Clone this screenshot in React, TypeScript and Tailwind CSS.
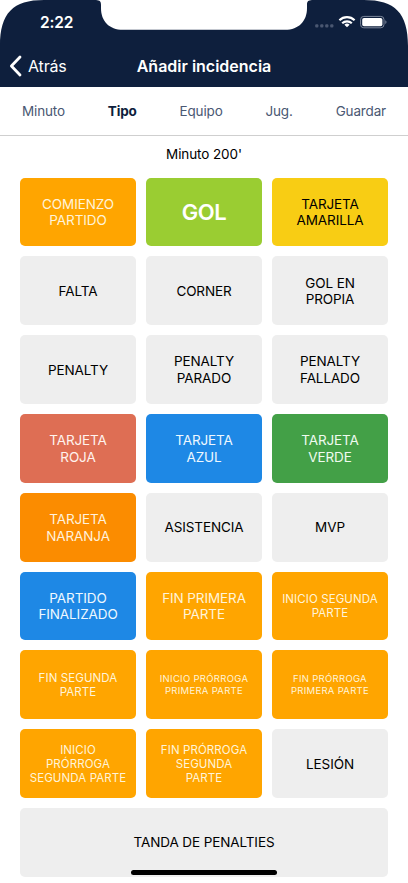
type Tile = {
  lines: string[];
  color: string;
  text?: string;
};

const gray = "bg-[#eeeeee] text-black";
const orange = "bg-[#ffa500] text-[#fff4d9]";
const normal = "text-[13.5px] leading-[16.6px] tracking-[-0.1px]";
const small = "text-[11.5px] leading-[14px] tracking-[0.1px]";
const tiny = "text-[9.5px] leading-[12px] tracking-[0.3px]";

const tiles: Tile[] = [
  { lines: ["COMIENZO", "PARTIDO"], color: orange },
  { lines: ["GOL"], color: "bg-[#9acd32] text-white", text: "text-[22px] leading-[24px] font-semibold tracking-[-0.4px]" },
  { lines: ["TARJETA", "AMARILLA"], color: "bg-[#f8cd14] text-black" },
  { lines: ["FALTA"], color: gray },
  { lines: ["CORNER"], color: gray },
  { lines: ["GOL EN", "PROPIA"], color: gray },
  { lines: ["PENALTY"], color: gray },
  { lines: ["PENALTY", "PARADO"], color: gray },
  { lines: ["PENALTY", "FALLADO"], color: gray },
  { lines: ["TARJETA", "ROJA"], color: "bg-[#de6e54] text-[#fff3ee]" },
  { lines: ["TARJETA", "AZUL"], color: "bg-[#1e88e5] text-[#eef8ff]" },
  { lines: ["TARJETA", "VERDE"], color: "bg-[#43a047] text-[#effbef]" },
  { lines: ["TARJETA", "NARANJA"], color: "bg-[#fb8c00] text-[#fff1dc]" },
  { lines: ["ASISTENCIA"], color: gray },
  { lines: ["MVP"], color: gray },
  { lines: ["PARTIDO", "FINALIZADO"], color: "bg-[#1e88e5] text-[#eef8ff]" },
  { lines: ["FIN PRIMERA", "PARTE"], color: orange },
  { lines: ["INICIO SEGUNDA", "PARTE"], color: orange, text: small },
  { lines: ["FIN SEGUNDA", "PARTE"], color: orange, text: small },
  { lines: ["INICIO PRÓRROGA", "PRIMERA PARTE"], color: orange, text: tiny },
  { lines: ["FIN PRÓRROGA", "PRIMERA PARTE"], color: orange, text: tiny },
  { lines: ["INICIO", "PRÓRROGA", "SEGUNDA PARTE"], color: orange, text: small },
  { lines: ["FIN PRÓRROGA", "SEGUNDA", "PARTE"], color: orange, text: small },
  { lines: ["LESIÓN"], color: gray },
];

const TileButton = ({ lines, color, text = normal }: Tile) => (
  <button className={`flex h-[68.8px] flex-col items-center justify-center rounded-[5px] pt-px whitespace-nowrap ${color} ${text}`}>
    {lines.map((line) => (
      <span key={line} className="block">{line}</span>
    ))}
  </button>
);

const StatusIcons = () => (
  <svg width="74" height="14" viewBox="0 0 74 14" fill="none">
    {/* no cellular signal */}
    <g fill="#4a5771">
      <rect x="1.2" y="9.2" width="3.2" height="3.2" rx="1" />
      <rect x="6.2" y="9.2" width="3.2" height="3.2" rx="1" />
      <rect x="11.2" y="9.2" width="3.2" height="3.2" rx="1" />
      <rect x="16.2" y="9.2" width="3.2" height="3.2" rx="1" />
    </g>
    {/* wifi */}
    <g stroke="#fff" strokeWidth="2.2">
      <path d="M25.4 5.2a11 11 0 0 1 15.2 0" />
      <path d="M28.2 8.2a7 7 0 0 1 9.6 0" />
    </g>
    <path d="M33 12.2 30.4 9.7a3.8 3.8 0 0 1 5.2 0z" fill="#fff" />
    {/* battery */}
    <rect x="46.6" y="1.4" width="23.4" height="11.4" rx="3.2" stroke="#7c879b" />
    <rect x="48.2" y="3" width="20.2" height="8.2" rx="1.8" fill="#fff" />
    <path d="M71.3 5.3c1.6.5 1.6 3.1 0 3.6z" fill="#7c879b" />
  </svg>
);

const Header = () => (
  <header className="relative h-[87px] bg-[#0e1f3d] text-white">
    {/* screen corners and notch */}
    <svg className="absolute inset-0" width="408" height="87" viewBox="0 0 408 87" fill="#fff">
      <path d="M0 0H44C13 0 0 13 0 46Z" />
      <path d="M408 0H364C395 0 408 13 408 46Z" />
      <path d="M96 0C100 .3 101 1.6 101 5V8C101 21 109 29.8 123 29.8H285C299 29.8 307 21 307 8V5C307 1.6 308 .3 312 0Z" />
    </svg>
    <div className="relative flex h-[44px] items-center justify-between pr-[20px] pl-[40px]">
      <span className="pt-[2px] text-[15.5px] leading-5 font-semibold tracking-[-0.2px]">2:22</span>
      <StatusIcons />
    </div>
    <div className="relative grid h-[43px] grid-cols-[1fr_auto_1fr] items-center">
      <button className="flex items-center gap-[6px] pl-[9px] text-[16px] leading-5 tracking-[-0.15px]">
        <svg width="13" height="22" viewBox="0 0 13 22" fill="none" stroke="#fff" strokeWidth="2.8" strokeLinecap="round" strokeLinejoin="round">
          <path d="M11 2 2.4 11 11 20" />
        </svg>
        Atrás
      </button>
      <h1 className="text-[16px] leading-5 font-semibold">Añadir incidencia</h1>
    </div>
  </header>
);

const tabs = ["Minuto", "Tipo", "Equipo", "Jug.", "Guardar"];

export default function App() {
  return (
    <div className="relative h-[883px] w-[408px] overflow-hidden bg-white font-['Inter',sans-serif]">
      <Header />
      <nav className="flex h-[49px] items-center justify-between border-b border-[#cfcfcf] px-[22px] text-[13.5px] leading-4 tracking-[-0.15px]">
        {tabs.map((tab) => (
          <button key={tab} className={tab === "Tipo" ? "font-bold text-[#0e1f3d]" : "text-[#4a5873]"}>
            {tab}
          </button>
        ))}
      </nav>
      <main className="px-5 pt-[9px]">
        <p className="text-center text-[13.5px] leading-[18px] tracking-[-0.1px] text-black">Minuto 200'</p>
        <div className="mt-[14.6px] grid grid-cols-3 gap-[10px]">
          {tiles.map((tile) => (
            <TileButton key={tile.lines.join(" ")} {...tile} />
          ))}
          <button className={`col-span-3 h-[68.8px] rounded-[5px] ${gray} ${normal}`}>TANDA DE PENALTIES</button>
        </div>
      </main>
      {/* home indicator */}
      <div className="absolute bottom-[8px] left-[131px] h-[5px] w-[146px] rounded-full bg-black" />
    </div>
  );
}
